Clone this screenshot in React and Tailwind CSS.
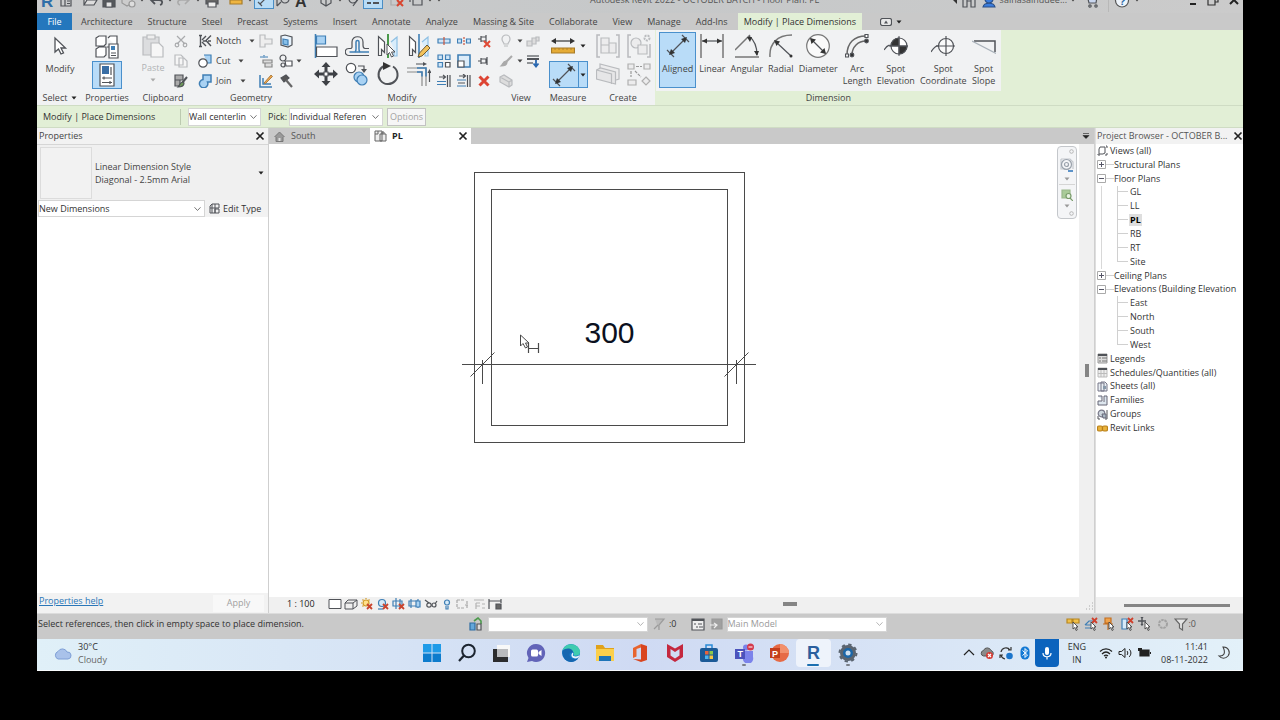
import React from "react";

const K = "#505358";
const B = "#3f7fb5";
const L = "#a9d2f3";
const G = "#b9bbbe";

function Svg({ s = 16, w, h, children, className = "" }) {
  const vw = w || s;
  const vh = h || s;
  return (
    <svg
      width={vw}
      height={vh}
      viewBox={`0 0 ${vw} ${vh}`}
      fill="none"
      stroke={K}
      strokeWidth="1.2"
      aria-hidden="true"
      className={`shrink-0 ${className}`}
    >
      {children}
    </svg>
  );
}

function Caret({ color = "#444", className = "" }) {
  return (
    <svg width="6" height="4" viewBox="0 0 6 4" aria-hidden="true" className={`shrink-0 ${className}`}>
      <path d="M0.5 0.5h5L3 3.5z" fill={color} />
    </svg>
  );
}

function Chevron({ color = "#777" }) {
  return (
    <svg
      width="7"
      height="5"
      viewBox="0 0 7 5"
      fill="none"
      stroke={color}
      aria-hidden="true"
      className="pointer-events-none absolute right-1 top-1/2 -translate-y-1/2"
    >
      <path d="M0.5 0.8 3.5 4 6.5 0.8" />
    </svg>
  );
}

function Close() {
  return (
    <Svg s={10}>
      <path d="M1.5 1.5l7 7M8.5 1.5l-7 7" stroke="#222" strokeWidth="1.7" />
    </Svg>
  );
}

function IconButton({ label, children, className = "" }) {
  return (
    <button type="button" aria-label={label} className={`flex shrink-0 items-center justify-center ${className}`}>
      {children}
    </button>
  );
}

/* ---------- Quick access toolbar ---------- */

const quick = [
  ["Revit menu", <Svg s={18}><text x="3" y="16" fill="#2f6ea8" stroke="none" fontSize="17" fontWeight="700" fontFamily="Liberation Sans, sans-serif">R</text></Svg>],
  ["Home", <Svg s={18}><path d="M4 3h10v12H4zM4 7h10M8 7v8M10 10h3M10 12.5h3" /></Svg>],
  "gap",
  ["Open", <Svg s={18}><path d="M3 14V5h5l1 2h5v2M3 14l3-5h10l-3 5z" fill="#ddd" /></Svg>],
  ["Save", <Svg s={18}><path d="M3 3h12v13H3z" fill="#55585c" /><path d="M6 11h6v5H6zM6 4h6v3H6z" fill="#e4e4e4" /></Svg>],
  ["Synchronize", <Svg s={18}><g stroke="#999"><path d="M3 6l5-2 5 2v6l-5 3-5-3z" fill="#ccc" /><circle cx="13" cy="13" r="3" fill="#ddd" /></g></Svg>],
  "caret",
  ["Undo", <Svg s={18}><path d="M4 9h8c4 0 4 4 1 5M8 5 4 9l4 4" strokeWidth="1.8" /></Svg>],
  "caret",
  ["Redo", <Svg s={18}><path d="M14 9H6c-4 0-4 4-1 5M10 5l4 4-4 4" stroke="#aaa" strokeWidth="1.6" /></Svg>],
  "caret",
  ["Print", <Svg s={18}><path d="M3 7h12v6H3z" fill="#666" /><path d="M5 11h8v5H5z" fill="#eee" /></Svg>],
  "gap",
  ["Measure", <Svg s={18}><path d="M3 9h12v4H3z" fill="#efb540" stroke="#a77d2a" /></Svg>],
  "caret",
  ["Aligned dimension", <Svg s={18}><path d="M5 13 14 4M3 11l4 4M12 2l4 4" /></Svg>, true],
  ["Tag by category", <Svg s={18}><circle cx="11" cy="8" r="4" /><path d="M3 15l4-4M3 9v6" /></Svg>],
  ["Text", <Svg s={18}><text x="2" y="16" fill="#333" stroke="none" fontSize="16" fontWeight="700" fontFamily="Liberation Sans, sans-serif">A</text></Svg>],
  "gap",
  ["Default 3D view", <Svg s={18}><path d="M4 6l5-3 5 3v6l-5 3-5-3zM4 6l5 3 5-3M9 9v6" /></Svg>],
  "caret",
  ["Section", <Svg s={18}><circle cx="8" cy="8" r="4" /><path d="M8 15l6-8" /></Svg>],
  ["Thin lines", <Svg s={18}><path d="M3 7h4M9 7h6M3 12h4M9 12h6" strokeWidth="2" /></Svg>, true],
  "gap",
  ["Close inactive views", <Svg s={18}><path d="M3 5h7v9H3z" stroke="#aaa" /><path d="M9 9l6 6M15 9l-6 6" stroke="#d8452f" strokeWidth="2" /></Svg>],
  ["Switch windows", <Svg s={18}><path d="M6 8h9v6H6zM3 6v5M3 6h6" /></Svg>],
  "caret",
  "caret",
];

function TitleBar() {
  return (
    <header className="flex h-[13px] shrink-0 items-end overflow-hidden bg-linear-to-r from-[#cbcccd] via-[#c6c8c9] to-[#cbcbcb]">
      <div className="flex h-[26px] w-full items-center pr-1">
        <div className="flex w-[553px] shrink-0 items-center gap-px pl-px">
          {quick.map((q, i) => {
            if (q === "gap") return <span key={i} className="w-1" />;
            if (q === "caret")
              return (
                <span key={i} className="flex w-2 justify-center">
                  <Caret />
                </span>
              );
            return (
              <IconButton
                key={i}
                label={q[0]}
                className={q[2] ? "h-[16px] overflow-hidden bg-[#b8dcf6] outline-1 outline-[#4a8dc4]" : "h-[18px]"}
              >
                {q[1]}
              </IconButton>
            );
          })}
        </div>
        <h1 className="shrink-0 whitespace-nowrap text-[#555]">Autodesk Revit 2022 - OCTOBER BATCH - Floor Plan: PL</h1>
        <div className="flex flex-1 items-center justify-end gap-1">
          <Svg w={5} h={8}><path d="M5 0v8L1 4z" fill="#333" stroke="none" /></Svg>
          <IconButton label="Search">
            <Svg s={16}><path d="M2 6h4v9H2zM10 6h4v9h-4zM6 9h4M3 6V3M13 6V3" /></Svg>
          </IconButton>
          <button type="button" className="flex items-center gap-[3px] whitespace-nowrap text-[#555]">
            <Svg s={16}><circle cx="8" cy="7" r="4" fill="#3b7ddd" stroke="#2a4f86" /><path d="M2 15c1-5 11-5 12 0z" fill="#3b7ddd" stroke="#2a4f86" /></Svg>
            sainasainudee...
            <Caret />
          </button>
          <IconButton label="App store" className="mx-1">
            <Svg s={16}><path d="M1 3h2l2 8h7l1-6H4" fill="#c9d6ee" /><circle cx="6" cy="14" r="1.2" /><circle cx="12" cy="14" r="1.2" /></Svg>
          </IconButton>
          <span className="h-6 w-px bg-[#b8b8b8]" />
          <IconButton label="Help" className="ml-px gap-1">
            <Svg s={16}><circle cx="8" cy="8.5" r="6.5" fill="#eef4fb" stroke="#555" /><text x="5" y="13" fill="#2f6ea8" stroke="none" fontSize="11" fontWeight="700" fontFamily="Liberation Sans, sans-serif">?</text></Svg>
            <Caret />
          </IconButton>
          <div className="ml-[45px] flex items-center gap-2.5">
            <IconButton label="Minimize"><Svg w={8} h={12}><path d="M1 10h6" stroke="#222" strokeWidth="2" /></Svg></IconButton>
            <IconButton label="Restore"><Svg s={12}><path d="M1 5h7v6H1zM3 5V2h8v6H8" stroke="#333" /></Svg></IconButton>
            <IconButton label="Close window"><Svg s={10}><path d="M1 1l8 8M9 1L1 9" stroke="#222" strokeWidth="2" /></Svg></IconButton>
          </div>
        </div>
      </div>
    </header>
  );
}

/* ---------- Ribbon tabs ---------- */

const tabs = ["Architecture", "Structure", "Steel", "Precast", "Systems", "Insert", "Annotate", "Analyze", "Massing & Site", "Collaborate", "View", "Manage", "Add-Ins"];

function RibbonTabs() {
  return (
    <nav className="flex h-[17px] shrink-0 items-stretch bg-[#c9c9c9] text-[#444]">
      <button type="button" className="w-[35px] bg-[#2477bd] text-white">File</button>
      <div className="flex gap-[15px] pr-2.5 pl-[9px]">
        {tabs.map((t) => (
          <button key={t} type="button" className="whitespace-nowrap">{t}</button>
        ))}
      </div>
      <button type="button" className="bg-[#e2efd6] px-1.5 whitespace-nowrap text-[#333]">Modify | Place Dimensions</button>
      <IconButton label="Minimize ribbon" className="ml-[18px] gap-1">
        <Svg w={12} h={8}><rect x="0.5" y="0.5" width="11" height="7" rx="2" fill="#e8e8e8" /><path d="M4 5.5h4L6 2.5z" fill={K} stroke="none" /></Svg>
        <Caret color="#222" />
      </IconButton>
    </nav>
  );
}

/* ---------- Ribbon ---------- */

function Panel({ title, caret, width, children }) {
  return (
    <section className={`flex shrink-0 flex-col bg-[#f1f2f3] ${width}`}>
      <div className="flex h-[61px] justify-center">{children}</div>
      <h2 className="flex h-[14px] items-center justify-center gap-1 text-[#444]">
        {title}
        {caret && <Caret color="#222" />}
      </h2>
    </section>
  );
}

function Small({ items, width = "w-5" }) {
  return (
    <div className={`flex flex-col pt-px ${width}`}>
      {items.map(([label, icon]) => (
        <IconButton key={label} label={label} className="h-5">{icon}</IconButton>
      ))}
    </div>
  );
}

function Pair({ items, width = "w-[31px]" }) {
  return (
    <div className={`flex flex-col pt-[2px] ${width}`}>
      {items.map(([label, icon]) => (
        <IconButton key={label} label={label} className="h-7">{icon}</IconButton>
      ))}
    </div>
  );
}

const geometryRows = [
  ["Notch", <Svg s={14}><path d="M1 1.500h3M1 12.500h3M2.500 1.500v11M5 7h4M13 1.500 8 6.500l5 5.500M8 2 4 6M8 12 4 8M10 7h3" strokeWidth="1.4" /></Svg>],
  ["Cut", <Svg s={14}><path d="M6 1h7v8H9" fill={L} stroke={B} /><circle cx="5" cy="9" r="4.2" fill="#fff" /></Svg>],
  ["Join", <Svg s={14}><path d="M5 1h8v7h-3.500A4.200 4.200 0 1 1 5 5.500z" fill={L} stroke={B} strokeWidth="1.5" /></Svg>],
];

const mirror = (
  <path d="M2.500 2.500v19h3v-6l3 3V8z" fill="#fff" stroke={K} />
);

const modifyPairs = [
  [
    ["Align", <Svg s={24}><path d="M1.500 0v24" stroke={B} strokeWidth="1.6" /><path d="M2.500 2h9v8h-9z" fill={L} stroke={B} /><path d="M2.500 13h20.500v9.500H2.500z" fill="#fff" /></Svg>],
    ["Move", <Svg s={24}><path d="M12 0l4.500 5h-3v5h-3V5h-3zM12 24l4.500-5h-3v-5h-3v5h-3zM0 12l5-4.500v3h5v3H5v3zM24 12l-5-4.500v3h-5v3h5v3z" fill="#3e4146" stroke="none" /><path d="M10 10h4v4h-4z" fill="#fff" /></Svg>],
  ],
  [
    ["Offset", <Svg s={24}><path d="M24 21.500H4c-5 0-5-7 0-7h1.500c2 0 1.500-2 1.500-3.500V8c0-7 11-7 11 0v3c0 1.500 0 3.500 2 3.500h4" /><path d="M24 18H4.500" stroke={B} strokeWidth="1.5" /><path d="M10 18c1.500-1 1-3 1-5V8c0-2 3-2 3 0v5c0 2-.5 4 1 5" stroke={B} strokeWidth="1.5" /></Svg>],
    ["Copy", <Svg s={24}><circle cx="6" cy="6" r="4.700" fill="#fff" /><path d="M13 4h6v3" /><path d="M16 7h6l-3 4z" fill={K} stroke="none" /><circle cx="14" cy="15" r="5" fill={L} stroke={B} /><circle cx="17" cy="18" r="5" fill={L} stroke={B} /></Svg>],
  ],
  [
    ["Mirror pick axis", <Svg s={24}>{mirror}<path d="M12 0v24" stroke="#4b9a4b" strokeWidth="2" /><path d="M15 8l6-5v19h-3v-6" fill="#d9edfb" stroke="#8fc0e4" /><path d="M11 10v11l2.500-2.500 2 4.500 2-1-2-4h3.500z" fill="#fff" strokeWidth="1" /></Svg>],
    ["Rotate", <Svg s={24}><path d="M8 4A9.500 9.500 0 1 0 17 4.500" strokeWidth="2" /><path d="M7 0v8l8-4z" fill="#333" stroke="none" /></Svg>],
  ],
  [
    ["Mirror draw axis", <Svg s={24}>{mirror}<path d="M12 0v24" stroke={B} strokeWidth="1.600" /><path d="M15 8l6-5v19h-3v-6" fill="#d9edfb" stroke="#8fc0e4" /><path d="M11 23l1.500-4L20 11l3 3-8 8z" fill="#f3c25a" stroke="#6e5a32" strokeWidth="1" /></Svg>],
    ["Trim", <Svg s={24}><path d="M0 6h19v18M0 10h15v14" stroke="#8a8a8a" /><path d="M10 6h9v8.500M10 10h5v4.500" stroke={B} strokeWidth="1.500" /><path d="M9 2h8M22.500 20V9" /><path d="M16 0l4 2-4 2zM20.500 11l2-4 2 4z" fill={K} stroke="none" /></Svg>],
  ],
];

const modifySmall = [
  [
    ["Split element", <Svg s={14}><path d="M1 5h12v4H1z" stroke={B} fill="#cfe5f7" /><path d="M7 3v8" stroke="#c8523a" /></Svg>],
    ["Array", <Svg s={14}><path d="M1 1h4.500v4.500H1zM8.500 1H13v4.500H8.500zM1 8.500h4.500V13H1z" fill="#cfe5f7" stroke={B} /><path d="M8.500 8.500H13V13H8.500z" fill="#fff" /></Svg>],
    ["Trim single", <Svg s={14}><path d="M2 3h6M6 1l2.500 2L6 5" /><path d="M0 7.500h9M0 10.500h9" stroke={B} /><path d="M10.500 1v12M13 1v12" /></Svg>],
  ],
  [
    ["Split with gap", <Svg s={14}><path d="M0.500 5h4v4h-4zM9.500 5h4v4h-4z" stroke={B} fill="#cfe5f7" /><path d="M7 3v8" stroke="#c8523a" strokeDasharray="2 1" /></Svg>],
    ["Scale", <Svg s={14}><path d="M1 1h12v12H1z" stroke={B} fill="#dcecf9" strokeWidth="1.600" /><path d="M1 7h6v6H1z" fill="#fff" /></Svg>],
    ["Trim multiple", <Svg s={14}><path d="M2 2h6M6 0l2.500 2L6 4M1 9h7" /><path d="M0 6h9M0 12h9" stroke={B} /><path d="M10.500 1v12M13 1v12" /></Svg>],
  ],
  [
    ["Unpin", <Svg s={14}><path d="M1 5h3M4 2v6M4 3h5v4H4M9 1v8" /><path d="M7 7l6 6M13 7l-6 6" stroke="#e04a35" strokeWidth="2" /></Svg>],
    ["Pin", <Svg s={14}><path d="M1 7h3M4 4v6M4 5h5v4H4M10 3v8" /></Svg>],
    ["Delete", <Svg s={14}><path d="M2.500 2.500l9 9M11.500 2.500l-9 9" stroke="#dd4433" strokeWidth="3" /></Svg>],
  ],
];

const alignedIcon = (
  <Svg s={24}>
    <path d="M4 20 20 4M1 16l7 7M16 1l7 7" />
    <path d="M3 21l2-6 4 4zM21 3l-2 6-4-4z" fill="#333" stroke="none" />
  </Svg>
);

const dimensions = [
  ["Aligned", "", alignedIcon],
  ["Linear", "", <Svg s={24}><path d="M1 0v24M23 0v24" stroke="#777" strokeWidth="1.500" /><path d="M2 7h20" /><path d="M2 7l5-2.500v5zM22 7l-5-2.500v5z" fill="#333" stroke="none" /></Svg>],
  ["Angular", "", <Svg s={24}><path d="M0 23h24M0 16 15 1" stroke="#777" strokeWidth="1.500" /><path d="M14 2c5 4 8 11 8 19" /><path d="M12 3l5 0-2 5zM22 22l-3-5h5z" fill="#333" stroke="none" /></Svg>],
  ["Radial", "", <Svg s={24}><path d="M1 23C0 10 8 1 23 1" stroke="#777" strokeWidth="1.500" /><path d="M7 8l15 14" /><path d="M5 6l6 1.500L7.500 12z" fill="#333" stroke="none" /><circle cx="22" cy="22" r="1.500" fill="#333" stroke="none" /></Svg>],
  ["Diameter", "", <Svg s={24}><circle cx="12" cy="12" r="11.300" fill="#fafafa" stroke="#777" /><path d="M5 5l14 14" /><path d="M4 4l6 1.500L5.500 10zM20 20l-6-1.500 4.500-4.500z" fill="#333" stroke="none" /></Svg>],
  ["Arc", "Length", <Svg s={24}><path d="M2 21C2 9 9 2 21 2M7 21C7 13 13 7 21 7" stroke="#666" strokeWidth="1.500" /><path d="M0.500 20h3v3h-3zM20 0.500h3v3h-3z" fill="#fff" /><circle cx="7" cy="21" r="1.800" fill="#333" /><circle cx="21.500" cy="7" r="1.800" fill="#333" /></Svg>],
  ["Spot", "Elevation", <Svg s={24}><path d="M0 16c4-6 6-5 8-4" /><circle cx="15" cy="12" r="8" fill="#fff" /><path d="M15 4a8 8 0 0 1 8 8h-8zM15 20a8 8 0 0 1-8-8h8z" fill="#333" transform="matrix(-1 0 0 1 30 0)" /><path d="M15 2v20M5 12h19" strokeWidth="1" /></Svg>],
  ["Spot", "Coordinate", <Svg s={24}><path d="M0 18c3-5 5-7 8-6" /><circle cx="15" cy="12" r="7.500" fill="#fafafa" /><path d="M15 2v20M5 12h19" /></Svg>],
  ["Spot", "Slope", <Svg s={24}><path d="M2 7h21v11" strokeWidth="1.500" /><path d="M0 7l24 12.500" stroke="#aab2ba" /></Svg>],
];

function Ribbon() {
  return (
    <div className="flex h-[75px] shrink-0 overflow-hidden bg-[#e2efd6] text-[#444]">
      <Panel title="Select" caret width="w-[46px]">
        <button type="button" className="flex flex-col items-center gap-[5px] pt-1">
          <Svg s={24}><path d="M7 4v14l3.500-3 2.500 5 2.500-1-2.500-5h4.500z" fill="#fff" strokeWidth="1.300" /></Svg>
          <span className="leading-3">Modify</span>
        </button>
      </Panel>
      <Panel title="Properties" width="w-[48px]">
        <div className="flex flex-col items-center pt-[3px]">
          <IconButton label="Type properties" className="h-7">
            <Svg s={24}><path d="M1 3l3-2h7v8l-2 2H1zM13 3l2-2h7v8l-1 2M1 14l3-2h7v8l-2 2H1zM12 12h2" fill="#fff" /><path d="M14 9h9v14h-9z" fill="#fff" /><path d="M16 11h4v4h-4z" fill={B} stroke="none" /><path d="M16 18h5M16 20.500h5" strokeWidth="1" /></Svg>
          </IconButton>
          <button type="button" aria-label="Properties palette" className="flex h-7 w-[30px] items-center justify-center border border-[#4a90cc] bg-[#b9dcf8]">
            <Svg s={24}><path d="M5 1h14v22H5z" fill="#fff" /><path d="M7 3h7v8H7z" fill="#3a6ea5" stroke="none" /><path d="M16 4v8M7 15h10M7 19.500h10M9 13.500v3M15 18v3" /></Svg>
          </button>
        </div>
      </Panel>
      <Panel title="Clipboard" width="w-[64px]">
        <button type="button" className="flex w-9 flex-col items-center gap-1 pt-1 text-[#b0b2b5]">
          <Svg s={24}><g stroke={G}><path d="M2 3h16v18H2z" fill="#dcdddf" /><path d="M6 1h8v4H6z" fill="#eee" /><path d="M10 9h8l4 4v10H10z" fill="#f6f6f6" /></g></Svg>
          <span className="leading-3">Paste</span>
          <Caret color="#aaa" />
        </button>
        <Small
          items={[
            ["Cut to clipboard", <Svg s={14}><path d="M3 2l8 8M11 2L3 10" stroke="#a9abad" /><circle cx="3" cy="11" r="1.800" stroke="#a9abad" /><circle cx="11" cy="11" r="1.800" stroke="#a9abad" /></Svg>],
            ["Copy to clipboard", <Svg s={14}><path d="M1 1h6l2 2v8H1zM5 4h5l3 3v6H5z" stroke={G} fill="#f6f6f6" /></Svg>],
            ["Match type", <Svg s={14}><path d="M1 1h8v5H1zM1 6h5v6H1z" fill="#aaa" /><path d="M13 3L8 9" strokeWidth="2" /><path d="M9 8c-3 0-3 3-5 5 4 0 6-1 6-4z" fill="#6d9a58" /></Svg>],
          ]}
        />
      </Panel>
      <Panel title="Geometry" width="w-[112px]">
        <div className="flex w-[58px] flex-col pt-px">
          {geometryRows.map(([label, icon]) => (
            <button key={label} type="button" className="flex h-5 items-center gap-[4px]">
              {icon}
              {label}
              <Caret className="ml-1" />
            </button>
          ))}
        </div>
        <Small
          items={[
            ["Cope", <Svg s={14}><path d="M1 1h5v4h7v5H6v3H1z" stroke={G} fill="#eee" /></Svg>],
            ["Wall joins", <Svg s={14}><path d="M1 3h3M6 3h3M5 1v3" stroke={B} /><path d="M4 6h9v3H4zM6 9v4h7v-3" fill="#ddd" stroke="#888" /></Svg>],
            ["Paint measure", <Svg s={14}><path d="M1 1v12h12M4 4v6h8" stroke={B} strokeWidth="1.500" /><path d="M5 9l7-8 1.500 1.500-7 7z" fill="#f0a54a" stroke="#9a6d31" strokeWidth="0.800" /></Svg>],
          ]}
        />
        <Small
          items={[
            ["Split face", <Svg s={14}><path d="M2 2l4-1 7 2v8l-4 2-7-2z" fill="#e8f3fc" /><path d="M4 5l5 1v5l-5-1z" fill="#86bfe9" stroke={B} /></Svg>],
            ["Demolish area", <Svg s={14}><circle cx="4" cy="4" r="3" /><path d="M6 7h7v5H7z" fill="#fff" /><circle cx="4" cy="11" r="2" /></Svg>],
            ["Demolish", <Svg s={14}><path d="M2 4l5-3 3 3-5 4z" fill="#555" /><path d="M7 6l6 7" stroke="#666" strokeWidth="2.200" /></Svg>],
          ]}
        />
        <div className="flex w-2 flex-col justify-center"><Caret /></div>
      </Panel>
      <Panel title="Modify" width="w-[190px]">
        {modifyPairs.map((p, i) => <Pair key={i} items={p} />)}
        {modifySmall.map((p, i) => <Small key={i} items={p} />)}
      </Panel>
      <Panel title="View" width="w-[48px]">
        <div className="flex flex-col pt-px">
          <IconButton label="Hide elements" className="h-5 gap-1"><Svg s={14}><path d="M5 10c0-2-2-2-2-5a4 4 0 0 1 8 0c0 3-2 3-2 5zM5 12h4" stroke={G} /></Svg><Caret /></IconButton>
          <IconButton label="Override graphics" className="h-5 gap-1"><Svg s={14}><path d="M13 2L7 8" stroke="#aaa" strokeWidth="2" /><path d="M7 7c-3 0-3 3-5 5 4 0 6-1 6-4z" fill="#aaa" stroke="#aaa" /></Svg><Caret /></IconButton>
          <IconButton label="Selection box" className="h-5 w-[14px]"><Svg s={14}><path d="M1 3l4-2 8 5v5l-3 2-9-5zM1 3l9 5v5M10 8l3-2" stroke={G} fill="#ddd" /></Svg></IconButton>
        </div>
        <Small
          width="w-5"
          items={[
            ["Displace elements", <Svg s={14}><path d="M1 7h5v5H1zM6 4h4v6H6zM10 3h3v4h-3z" stroke={G} fill="#ddd" /></Svg>],
            ["Linework", <Svg s={14}><path d="M1 2h12" /><path d="M1 5h12" strokeWidth="2" /><path d="M1 9h6" /><path d="M10 6v6M7.500 9.500 10 12.500l2.500-3" stroke="#2a68b0" strokeWidth="1.800" /></Svg>],
          ]}
        />
      </Panel>
      <Panel title="Measure" width="w-[46px]">
        <div className="flex flex-col items-center gap-px pt-[2px]">
          <IconButton label="Measure between references" className="h-7 gap-[5px]">
            <Svg s={24}><path d="M3 7h18" stroke="#333" /><path d="M0 7l5-3v6zM24 7l-5-3v6z" fill="#333" stroke="none" /><path d="M0.500 14h23v5h-23z" fill="#e5ab35" stroke="#a87b26" /><path d="M4 14v2M8 14v2M12 14v2M16 14v2M20 14v2" stroke="#a87b26" strokeWidth="0.800" /></Svg>
            <Caret color="#222" />
          </IconButton>
          <div className="flex h-[27px] border border-[#4a90cc] bg-[#b9dcf8]">
            <IconButton label="Dimension tools" className="w-7">{alignedIcon}</IconButton>
            <IconButton label="More dimension tools" className="w-[9px] border-l border-[#4a90cc]"><Caret color="#222" /></IconButton>
          </div>
        </div>
      </Panel>
      <Panel title="Create" width="w-[64px]">
        <Pair
          items={[
            ["Create assembly", <Svg s={24}><g stroke={G}><path d="M4 1H1v22h3M20 1h3v22h-3" strokeWidth="1.500" /><path d="M5 4h8v7H5zM5 11h8v8H5zM13 9h7v10h-7z" fill="#ececed" /></g></Svg>],
            ["Create similar", <Svg s={24}><g stroke={G}><path d="M4 6V2l19 5v10l-3 1" fill="#ececed" /><path d="M0.500 8l4-2 15 4v12L0.500 17zM0.500 8l15 4v10" fill="#e6e6e7" /></g></Svg>],
          ]}
        />
        <Pair
          items={[
            ["Create group", <Svg s={24}><g stroke={G}><path d="M4 1H1v22h3M23 10v13h-3" strokeWidth="1.500" /><circle cx="9" cy="9" r="5" fill="#ececed" /><path d="M11 11h9v9h-9z" fill="#ececed" /><circle cx="20" cy="4" r="2.500" strokeWidth="2" strokeDasharray="2 1" /></g></Svg>],
            ["Create parts", <Svg s={24}><g stroke="#b0b0b0"><path d="M1 2h6v5H1zM17 2h6v5h-6zM1 18h8v5H1zM19 15l4 4-4 4-4-4z" fill="#ececed" /><path d="M9 4.500h6M4 9v6M8 9l6 6" stroke="#999" strokeDasharray="3 1" /></g></Svg>],
          ]}
        />
      </Panel>
      <section className="flex shrink-0 flex-col pl-px">
        <div className="flex h-[61px] items-start gap-px bg-[#f1f2f3] px-[3px] pt-[2px]">
          {dimensions.map(([a, b, icon], i) => (
            <button
              key={a + b}
              type="button"
              className={
                i === 0
                  ? "flex h-14 flex-col items-center gap-[5px] border border-[#4a90cc] bg-[#b9dcf8] px-[2px] pt-px"
                  : "flex h-14 flex-col items-center gap-[5px] px-[2px] pt-[2px]"
              }
            >
              {icon}
              <span className="flex flex-col leading-3">
                <span>{a}</span>
                {b && <span>{b}</span>}
              </span>
            </button>
          ))}
        </div>
        <h2 className="flex h-[14px] items-center justify-center">Dimension</h2>
      </section>
    </div>
  );
}

/* ---------- Options bar ---------- */

function Combo({ label, value, className = "", textClass = "", chevron }) {
  return (
    <div className={`relative ${className}`}>
      <select
        aria-label={label}
        defaultValue={value}
        className={`h-full w-full appearance-none overflow-hidden border border-[#d5d5d5] bg-white ${textClass}`}
      >
        <option value={value}>{value}</option>
      </select>
      <Chevron color={chevron} />
    </div>
  );
}

function OptionsBar() {
  return (
    <div className="flex h-[23px] shrink-0 items-center border-y border-[#cfdcc4] bg-[#e2efd6] pl-1.5 text-[#333]">
      <span className="w-[137px] whitespace-nowrap">Modify | Place Dimensions</span>
      <span className="mr-[7px] h-4 w-px bg-[#bccab0]" />
      <Combo label="Wall reference" value="Wall centerlin" className="h-[18px] w-[73px]" />
      <label htmlFor="pick" className="ml-[7px] w-[21px]">Pick:</label>
      <div className="relative h-[18px] w-[94px]">
        <select id="pick" defaultValue="r" className="h-full w-full appearance-none border border-[#d5d5d5] bg-white">
          <option value="r">Individual Referen</option>
        </select>
        <Chevron />
      </div>
      <button type="button" disabled className="ml-1 h-[18px] w-[39px] border border-[#c2c2c2] bg-[#f6f6f6] text-[#a3a3a3]">Options</button>
    </div>
  );
}

/* ---------- Properties ---------- */

function PropertiesPanel() {
  return (
    <aside className="flex w-[232px] shrink-0 flex-col border-r border-[#cfcfcf] bg-white text-[#444]">
      <div className="flex h-4 shrink-0 items-center justify-between bg-[#f2f2f2] pr-[3px] pl-[2px]">
        <h2>Properties</h2>
        <IconButton label="Close properties"><Close /></IconButton>
      </div>
      <button type="button" className="flex h-14 shrink-0 items-center border-t border-[#d6d6d6] bg-[#f0f0f0] pr-[4px] pl-[3px] text-left">
        <span className="h-[52px] w-[52px] border border-[#dcdcdc] bg-[#f2f2f2]" />
        <span className="ml-[3px] flex-1 leading-[13px]">
          Linear Dimension Style
          <br />
          Diagonal - 2.5mm Arial
        </span>
        <Caret color="#222" />
      </button>
      <div className="flex h-[17px] shrink-0 items-center bg-[#f2f2f2] pl-px">
        <Combo label="Element filter" value="New Dimensions" className="h-[17px] w-[167px]" textClass="text-[#333]" />
        <button type="button" className="ml-1 flex items-center gap-[3px] whitespace-nowrap text-[#333]">
          <Svg s={11}><path d="M1 3l2-2h3v9H1zM6 1h4v4H6M3 1v9M1 5h5M6 6h4v4H6z" strokeWidth="1" /></Svg>
          Edit Type
        </button>
      </div>
      <div className="flex-1" />
      <div className="flex h-5 shrink-0 items-center justify-between bg-[#f2f2f2] pr-1 pl-[2px]">
        <a href="#help" className="mb-1 text-[#2a76b8] underline">Properties help</a>
        <button type="button" disabled className="h-[17px] w-[51px] bg-[#f8f8f8] text-[#a0a0a0]">Apply</button>
      </div>
    </aside>
  );
}

/* ---------- Drawing area ---------- */

const viewIcons = [
  ["Detail level", <Svg s={14}><path d="M1 2.500h12v9H1z" strokeWidth="1" fill="#fff" /></Svg>],
  ["Visual style", <Svg s={14}><path d="M1 6h8v6H1zM1 6l3-3h9L9 6M13 3v6l-4 3" strokeWidth="1" fill="#eee" /></Svg>],
  ["Sun path", <Svg s={14}><circle cx="6" cy="6" r="3" fill="#ffe08a" stroke="#d19a26" /><path d="M6 1v1M1 6h1M2.500 2.500l1 1M9.500 2.500l-1 1M2.500 9.500l1-1" stroke="#d19a26" /><path d="M7 7l5 5M12 7l-5 5" stroke="#c9442e" strokeWidth="1.800" /></Svg>],
  ["Shadows", <Svg s={14}><circle cx="6" cy="6" r="3.500" fill="#d6eaf8" stroke={B} /><path d="M2 12h5" stroke={B} /><path d="M7 7l5 5M12 7l-5 5" stroke="#c9442e" strokeWidth="1.800" /></Svg>],
  ["Crop view", <Svg s={14}><path d="M1 4h9v5H1zM4 1v11M8 2v9" stroke={B} /><path d="M7 7l5 5M12 7l-5 5" stroke="#c9442e" strokeWidth="1.800" /></Svg>],
  ["Show crop region", <Svg s={14}><path d="M1 4h8v5H1zM3 2v9M10 2v9" stroke={B} /><path d="M8 4h4v6H8z" fill="#a9d2f3" stroke={B} /></Svg>],
  ["Temporary hide", <Svg s={14}><path d="M1 3l4 3M13 4l-2 3" /><circle cx="5" cy="8" r="2.200" /><circle cx="10" cy="8" r="2" /></Svg>],
  ["Reveal hidden", <Svg s={14}><circle cx="7" cy="5.500" r="2.500" fill="#d6eaf8" stroke={B} /><path d="M6 9v3h2V9" stroke={B} /></Svg>],
  ["Temporary view properties", <Svg s={14}><path d="M1 3h8M1 3v8h7M11 4v7M9 8h4" stroke="#a8a8a8" strokeDasharray="3 1" /></Svg>],
  ["Analytical model", <Svg s={14}><path d="M2 3h10M4 6v6M4 6h4M4 9h4M10 7h3M10 11h3" stroke="#b4b4b4" /></Svg>],
  ["Reveal constraints", <Svg s={14}><path d="M1 2v10M1 4h12M13 2v4" /><path d="M8 7h5v5H8z" fill="#666" /></Svg>],
];

function DrawingArea() {
  return (
    <main className="flex min-w-0 flex-1 flex-col border-r border-[#cfcfcf] bg-white">
      <div className="flex h-4 shrink-0 items-center bg-[#c9c9c9] text-[#555]">
        <button type="button" className="flex w-[101px] items-center gap-[6px] pl-[5px]">
          <Svg s={11}><path d="M0.500 6 5.500 1l5 5M2 6v4.500h7V6" fill="#999" stroke="#777" strokeWidth="1" /><path d="M4.500 7h2v3h-2z" fill="#ddd" stroke="none" /></Svg>
          South
        </button>
        <div className="flex h-full w-[101px] items-center bg-white pr-[3px] pl-1">
          <Svg w={13} h={12}><path d="M1 1h7v10H1zM4 1v3M1 4h3M6 4h6v7H6zM8 4V2h2v2" strokeWidth="1" stroke="#666" fill="#eee" /></Svg>
          <button type="button" className="flex-1 pl-[5px] text-left font-bold text-[#222]">PL</button>
          <IconButton label="Close view"><Close /></IconButton>
        </div>
        <IconButton label="View list" className="mr-1 ml-auto"><Svg w={8} h={6}><path d="M1 0.500h6M1 2.500h6L4 5.500z" fill="#222" stroke="#222" strokeWidth="0.600" /></Svg></IconButton>
      </div>
      <div className="flex min-h-0 flex-1">
        <div className="relative min-w-0 flex-1">
          <svg width="100%" height="100%" fill="none" stroke="#4a4a4a" strokeWidth="1" role="img" aria-label="Floor plan" className="absolute inset-0">
            <rect x="205.500" y="28.500" width="270" height="270" />
            <rect x="222.500" y="45.500" width="236" height="236" />
            <path d="M193 220.500h294M213.500 216v24M467.500 216v24M201.500 232.500l24-24M455.500 232.500l24-24" />
            <text x="315.500" y="199" fill="#0b1020" stroke="none" fontSize="30" fontFamily="Liberation Sans, Arial, sans-serif">300</text>
            <path d="M251.500 191v11l2.500-2.500 2.500 4.500 2-1-2-4h3.500z" fill="#fff" />
            <path d="M259.500 199v10M269.500 199v10M259.500 204.500h10" strokeWidth="1.200" />
          </svg>
          <div className="absolute top-[2px] right-[2px] flex h-[73px] w-5 flex-col items-center justify-between rounded border border-[#c4c7cb] bg-[#f4f5f7] py-[2px]">
            <Svg w={14} h={5} className="self-end"><circle cx="9.500" cy="2.500" r="1.800" stroke="#aaa" strokeWidth="0.800" /></Svg>
            <IconButton label="Steering wheel"><Svg w={16} h={17}><path d="M2 2h9l3 3v7M2 2v10h8" stroke="#c4c8ce" /><circle cx="7.500" cy="7.500" r="5" stroke="#9aa2ac" /><circle cx="7.500" cy="7.500" r="2" stroke="#9aa2ac" /><path d="M9 14h5" stroke="#5d93c9" strokeWidth="2" /></Svg></IconButton>
            <Caret color="#999" />
            <span className="h-px w-4 bg-[#d5d5d5]" />
            <IconButton label="Zoom region"><Svg s={12}><path d="M1 1h8v8H1z" fill="#a9cb98" stroke="#9ab88c" /><circle cx="7.500" cy="7" r="2.500" fill="#e8f3e2" stroke="#789b69" /><path d="M9 9l3 3" stroke="#789b69" /></Svg></IconButton>
            <Caret color="#999" />
            <Svg w={14} h={5} className="self-end"><circle cx="9.500" cy="2.500" r="1.800" stroke="#aaa" strokeWidth="0.800" /></Svg>
          </div>
        </div>
        <div className="flex w-[15px] shrink-0 items-center justify-center bg-[#f0f0f0]">
          <span className="h-[13px] w-1 bg-[#858585]" />
        </div>
      </div>
      <div className="flex h-4 shrink-0 items-center bg-[#f0f0f0] pb-[2px] text-[#222]">
        <button type="button" className="w-[59px] pl-[18px] text-left whitespace-nowrap">1 : 100</button>
        <div className="flex gap-[2px]">
          {viewIcons.map(([label, icon]) => <IconButton key={label} label={label}>{icon}</IconButton>)}
        </div>
        <div className="flex flex-1 justify-center pr-[7px]">
          <span className="h-1 w-[14px] bg-[#858585]" />
        </div>
        <Svg s={10} className="self-end"><path d="M8 2h1M5 5h1M8 5h1M2 8h1M5 8h1M8 8h1" stroke="#aaa" /></Svg>
      </div>
    </main>
  );
}

/* ---------- Project browser ---------- */

const tree = [
  [0, "Views (all)", "views"],
  [1, "Structural Plans", "+"],
  [1, "Floor Plans", "-"],
  [2, "GL", "", true], [2, "LL", "", true], [2, "PL", "active", true], [2, "RB", "", true], [2, "RT", "", true], [2, "Site", "last", true],
  [1, "Ceiling Plans", "+"],
  [1, "Elevations (Building Elevation", "-"],
  [2, "East"], [2, "North"], [2, "South"], [2, "West", "last"],
  [0, "Legends", "legend"],
  [0, "Schedules/Quantities (all)", "table"],
  [0, "Sheets (all)", "sheet"],
  [0, "Families", "family"],
  [0, "Groups", "group"],
  [0, "Revit Links", "link"],
];

const treeIcons = {
  views: <Svg s={11}><path d="M3 2h5v6l-2 1H2V4zM9 1h1v2M1 9v1h2M10 8v2H8" strokeWidth="1" /></Svg>,
  legend: <Svg s={11}><path d="M1 1h9v9H1z" fill="#ddd" stroke="#999" strokeWidth="1" /><path d="M1 2h9" strokeWidth="2" /><path d="M2 5h2M5 5h5M2 8h2M5 8h5" stroke="#777" strokeWidth="1" /></Svg>,
  table: <Svg s={11}><path d="M1 1h9v9H1zM1 6.500h9M4 3v7M7 3v7" fill="#eee" stroke="#bbb" strokeWidth="1" /><path d="M1 2h9" strokeWidth="2" /></Svg>,
  sheet: <Svg s={11}><path d="M1 2h6v8H1zM4 1h4l2 2v7H4z" fill="#e8eef3" stroke="#778" strokeWidth="1" /><path d="M6 5h3v3H6z" fill="#89a" stroke="none" /></Svg>,
  family: <Svg s={11}><path d="M1 1h4v5H1v4h9V1H7v6" fill="#dde6ee" stroke="#667" strokeWidth="1" /></Svg>,
  group: <Svg s={11}><path d="M10 1v9H8M1 7v3h2" strokeWidth="1" /><circle cx="4.500" cy="4.500" r="3.300" fill="#cdd6dd" stroke="#778" /><path d="M5 5h4v4H6z" fill="#aab8c4" stroke="#667" strokeWidth="1" /></Svg>,
  link: <Svg s={11}><rect x="0.500" y="3" width="5" height="5" rx="1.500" fill="#e9b23c" stroke="#b98019" /><rect x="5.500" y="3" width="5" height="5" rx="1.500" fill="#e9b23c" stroke="#b98019" /></Svg>,
};

function TreeRow({ level, text, kind, trunk }) {
  if (level === 0)
    return (
      <li className="flex items-center gap-[2px] pl-px">
        {treeIcons[kind]}
        <span>{text}</span>
      </li>
    );
  if (level === 1)
    return (
      <li className="flex items-center pl-px">
        <Svg s={9}><path d="M0.500 0.500h8v8h-8z" fill="#fff" stroke="#aaa" strokeWidth="1" /><path d={kind === "+" ? "M2 4.500h5M4.500 2v5" : "M2 4.500h5"} stroke="#556" strokeWidth="1" /></Svg>
        <span className="h-px w-2 bg-[#d0d0d0]" />
        <span className="whitespace-nowrap">{text}</span>
      </li>
    );
  return (
    <li className="flex items-center pl-[5px]">
      <span className={`w-4 self-stretch border-l ${trunk ? "border-[#d8d8d8]" : "border-transparent"}`} />
      <span className={`flex flex-col self-stretch border-l border-[#d0d0d0] ${kind === "last" ? "mb-[7px]" : ""}`}>
        <span className={`w-2.5 border-[#d0d0d0] ${kind === "last" ? "flex-1 border-b" : "h-1/2 border-b"}`} />
      </span>
      <span className={kind === "active" ? "ml-px bg-[#dedede] px-px leading-3 font-bold text-black" : "ml-[2px]"}>{text}</span>
    </li>
  );
}

function ProjectBrowser() {
  return (
    <aside className="flex w-[148px] shrink-0 flex-col border-l border-[#dedede] bg-white text-[#333]">
      <div className="flex h-4 shrink-0 items-center justify-between bg-[#f2f2f2] pl-px">
        <h2 className="whitespace-nowrap text-[#555]">Project Browser - OCTOBER B...</h2>
        <IconButton label="Close project browser"><Close /></IconButton>
      </div>
      <ul className="grid h-[291px] shrink-0 auto-rows-fr overflow-hidden">
        {tree.map(([level, text, kind, trunk]) => (
          <TreeRow key={level + text} level={level} text={text} kind={kind} trunk={trunk} />
        ))}
      </ul>
      <div className="flex-1" />
      <div className="flex h-4 shrink-0 items-center bg-[#f0f0f0] pr-[13px] pl-7">
        <span className="h-[3px] flex-1 bg-[#858585]" />
      </div>
    </aside>
  );
}

/* ---------- Status bar ---------- */

const arrow = <path d="M7 5v7l1.800-1.500 1.300 3 1.200-.6-1.300-2.900h2z" fill="#fff" strokeWidth="0.900" stroke="#444" />;
const selectIcons = [
  ["Select links", <Svg s={14}><path d="M1 2h5v4H1zM7 2h6v4H7z" fill="#f0c04a" stroke="#b8861e" />{arrow}</Svg>],
  ["Select underlay", <Svg s={14}><path d="M1 8l4-4h6M1 8h6M1 11h6" stroke={B} /><path d="M8 1l5 5M13 1l-5 5" stroke="#cf402c" strokeWidth="1.800" />{arrow}</Svg>],
  ["Select pinned", <Svg s={14}><path d="M3 1h6v5H3zM1 7h10M6 7v6" fill="#f0a24a" stroke="#c46f21" />{arrow}</Svg>],
  ["Select by face", <Svg s={14}><path d="M2 2h5v10H2z" fill="#d7eaf8" stroke={B} /><path d="M8 1l5 5M13 1l-5 5" stroke="#cf402c" strokeWidth="1.800" />{arrow}</Svg>],
  ["Drag on selection", <Svg s={14}><path d="M4 0v8M0 4h8M3 1l1-1 1 1M3 7l1 1 1-1" strokeWidth="1.400" />{arrow}</Svg>],
  ["Background processes", <Svg s={14}><circle cx="7" cy="7" r="4" stroke="#a2a2a2" strokeWidth="2" strokeDasharray="2.500 0.800" /></Svg>],
];

function StatusBar() {
  return (
    <footer className="flex h-[26px] shrink-0 items-center border-t border-[#dcdcdc] bg-[#c9c9c9] pb-[5px] text-[#333]">
      <p className="w-[432px] shrink-0 pl-px">Select references, then click in empty space to place dimension.</p>
      <Svg s={14}><path d="M1 6h5v7H1z" fill="#63a7da" stroke="#2e6da3" /><path d="M5 4l4-3 3 3v3" stroke="#4b9a4b" strokeWidth="1.600" /><path d="M8 7h4v6H8z" fill="#ddd" /></Svg>
      <Combo label="Active workset" value="" className="ml-[5px] h-[15px] w-[160px]" chevron="#b5b5b5" />
      <button type="button" className="ml-1 flex items-center gap-[3px] text-[#333]">
        <Svg s={14}><path d="M3 2h9L7 8v5M2 12l4-4" stroke="#9c9c9c" fill="#bbb" /></Svg>
        :0
      </button>
      <IconButton label="Design options" className="ml-[14px]"><Svg s={14}><path d="M1 2h12v11H1z" fill="#eee" /><path d="M1 3h12" strokeWidth="2" /><path d="M3 7h2M7 7h4M5 10h2M8 10h4" /></Svg></IconButton>
      <IconButton label="Add to set" className="mx-1"><Svg s={14}><path d="M3 2h10v10H3z" fill="#a0a0a0" stroke="#999" /><path d="M1 8h6M5 6l3 2-3 3" stroke="#eee" /></Svg></IconButton>
      <Combo label="Design option" value="Main Model" className="h-[15px] w-[160px]" textClass="text-[#9a9a9a]" chevron="#b5b5b5" />
      <div className="ml-auto flex items-center gap-[4px] pr-[47px]">
        {selectIcons.map(([label, icon]) => <IconButton key={label} label={label}>{icon}</IconButton>)}
        <button type="button" className="flex items-center text-[#555]">
          <Svg s={14}><path d="M1 2h12L8.500 7v6l-3-2V7z" fill="#e4e4e4" stroke="#666" /></Svg>
          :0
        </button>
      </div>
    </footer>
  );
}

/* ---------- Taskbar ---------- */

const lf = "Liberation Sans, Arial, sans-serif";
const apps = [
  ["Start", <Svg s={20}><g stroke="none"><path d="M1 1h8.500v8.500H1zM10.500 1H19v8.500h-8.500z" fill="#1f9be8" /><path d="M1 10.500h8.500V19H1zM10.500 10.500H19V19h-8.500z" fill="#0d7ccd" /></g></Svg>],
  ["Search", <Svg s={20}><circle cx="11.500" cy="8" r="6.300" stroke="#1c2430" strokeWidth="2" /><path d="M7 12.500l-5 5.500" stroke="#1c2430" strokeWidth="2.200" /></Svg>],
  ["Task view", <Svg s={20}><g stroke="none"><path d="M6 2h13v12H6z" fill="#f8f8f8" /><path d="M2 6h15v13H2z" fill="#2c2c2e" /><path d="M6 6h11v8H6z" fill="#b9babd" /></g></Svg>],
  ["Chat", <Svg s={20}><path d="M10 1a9 9 0 1 1-4 17l-5 1 1.500-4A9 9 0 0 1 10 1z" fill="#6264b8" stroke="none" /><rect x="5" y="6.500" width="7" height="7" rx="1.500" fill="#fff" stroke="none" /><path d="M12.500 9l3-2v6l-3-2z" fill="#fff" stroke="none" /></Svg>],
  ["Edge", <Svg s={20}><g stroke="none"><circle cx="10" cy="10" r="9" fill="#1479c9" /><path d="M1.500 7.500C4-1 17-.5 19 8c.7 4-3 5.500-6.500 4.500C15 8 7 3.500 1.500 7.500z" fill="#3ecbb0" /><path d="M1.500 8C6 3 13 6 12 10c-3-1.500-5 1.500-2 5 2 1.500 5 1.500 7 .5C12 22 1 19 1.500 8z" fill="#1566b0" /><path d="M12 9.500c1 2-1 2.500.5 3.500 2 1 5 .3 6-1-.2 2-2 3.500-4 3.500-4 0-5.500-4-2.500-6z" fill="#e9f2fb" /></g></Svg>],
  ["File Explorer", <Svg s={20}><g stroke="none"><path d="M1 2h7l2 3h9v4H1z" fill="#e0a21c" /><path d="M1 6h18v12H1z" fill="#fbcf4b" /><path d="M4 13h12v5H4z" fill="#1d74b8" /></g></Svg>],
  ["Office", <Svg s={20}><g stroke="none"><path d="M11 1l6 2v14l-6 2-8-3 8 .5V4z" fill="#d9451f" /><path d="M11 1v3.500L6.500 6v7.500L3 15V5z" fill="#e8642f" /></g></Svg>],
  ["McAfee", <Svg s={20}><path d="M2 1l8 4.500L18 1v13l-8 5-8-5zM5.500 6v6.500l4.500 3 4.500-3V6L10 9z" fill="#c4283f" fillRule="evenodd" stroke="none" /></Svg>],
  ["Store", <Svg s={20}><path d="M7 5V2h6v3" stroke="#2a8bd6" strokeWidth="1.500" /><rect x="1" y="5" width="18" height="14" rx="2" fill="#1c5a97" stroke="none" /><g stroke="none"><path d="M6 8h3.500v3.500H6z" fill="#e8643c" /><path d="M10.500 8H14v3.500h-3.500z" fill="#8cc84b" /><path d="M6 12.500h3.500V16H6z" fill="#4db4ee" /><path d="M10.500 12.500H14V16h-3.500z" fill="#f7c743" /></g></Svg>],
  ["Teams", <Svg s={20}><g stroke="none"><circle cx="12" cy="4.500" r="3" fill="#7b83eb" /><path d="M8 8h11v6a5 5 0 0 1-10 3z" fill="#7b83eb" /><path d="M1 6h10v10H1z" fill="#4b53bc" /><text x="3.500" y="14" fontSize="9" fontWeight="700" fill="#fff" fontFamily={lf}>T</text><circle cx="16.500" cy="4" r="3.500" fill="#d43a4c" /><path d="M14.500 3.500h4v1h-4z" fill="#fff" /></g></Svg>, "bg-[#7a7f88] w-1"],
  ["PowerPoint", <Svg s={20}><g stroke="none"><circle cx="11" cy="10" r="9" fill="#e66a45" /><path d="M11 1a9 9 0 0 1 9 9h-9z" fill="#f2906c" /><path d="M1 5h10v10H1z" fill="#c43e1c" /><text x="3" y="13.500" fontSize="9" fontWeight="700" fill="#fff" fontFamily={lf}>P</text></g></Svg>],
  ["Revit", <Svg s={20}><text x="4" y="16" fontSize="18" fontWeight="700" fill="#2b5f9e" stroke="none" fontFamily={lf}>R</text></Svg>, "bg-[#1c6fb0] w-3", true],
  ["Settings", <Svg s={20}><circle cx="10" cy="10" r="6.500" fill="#1b66a8" stroke="#5a6470" strokeWidth="3" /><circle cx="10" cy="10" r="8.500" stroke="#5a6470" strokeWidth="2" strokeDasharray="3.300 3.370" /><circle cx="10" cy="10" r="2.500" fill="#cfe0f0" stroke="none" /></Svg>, "bg-[#7a7f88] w-1"],
];

function Taskbar() {
  return (
    <nav className="flex h-8 shrink-0 items-stretch border-b border-white/80 bg-linear-to-r from-[#e0f0f8] via-[#cfdaf3] to-[#e3f1f9] text-[#333]">
      <div className="flex flex-1 items-start pt-px">
        <button type="button" className="flex items-center gap-[6px] pl-4 text-left">
          <Svg w={19} h={14}><path d="M5 13a4 4 0 0 1 0-7.500A5 5 0 0 1 14 6a3.500 3.500 0 0 1 1 7z" fill="#a9c2ea" stroke="#7e9fd6" strokeWidth="1" /></Svg>
          <span className="leading-[13px]">
            30°C
            <br />
            <span className="text-[#666]">Cloudy</span>
          </span>
        </button>
      </div>
      <div className="flex w-[451px] shrink-0">
        {apps.map(([label, icon, mark, on]) => (
          <button
            key={label}
            type="button"
            aria-label={label}
            className={`flex h-7 flex-1 flex-col items-center justify-between rounded pt-1 pb-px ${on === true ? "bg-white/60" : ""}`}
          >
            {icon}
            <span className={`h-[2px] rounded ${mark || ""}`} />
          </button>
        ))}
      </div>
      <div className="flex h-7 flex-1 items-center justify-end">
        <div className="flex items-center gap-[5px] pr-[3px]">
          <IconButton label="Hidden icons"><Svg w={12} h={14}><path d="M1 9l5-5 5 5" stroke="#222" /></Svg></IconButton>
          <IconButton label="OneDrive"><Svg s={14}><path d="M3.500 10a2.800 2.800 0 0 1 0-5.500 4 4 0 0 1 7.500 0c3 1 3 5 0 5.500z" fill="#8a8a8a" stroke="#555" strokeWidth="1" /><circle cx="9.500" cy="9.500" r="3.500" fill="#d43a33" stroke="none" /><path d="M8 8l3 3M11 8l-3 3" stroke="#fff" /></Svg></IconButton>
          <IconButton label="Sync"><Svg s={14}><path d="M2 6a5 5 0 0 1 9-2M12 1v3H9M2 9a5 5 0 0 0 4 4M1 12V9h3" stroke="#333" /><circle cx="10.500" cy="10" r="3.300" fill="#1c76cc" stroke="none" /></Svg></IconButton>
          <IconButton label="Bluetooth"><Svg s={14}><rect x="2.500" y="0.500" width="9" height="13" rx="4.500" fill="#1379d4" stroke="none" /><path d="M4.500 4.500l5 4.500L7 11.500v-9L9.500 5l-5 4.500" stroke="#fff" strokeWidth="1" /></Svg></IconButton>
        </div>
        <IconButton label="Microphone" className="h-full w-6 rounded-b bg-[#0b63bd]"><Svg s={14}><rect x="5" y="1" width="4" height="8" rx="2" fill="#fff" stroke="none" /><path d="M3 7c0 5 8 5 8 0M7 11v2.500" stroke="#fff" /></Svg></IconButton>
        <button type="button" className="w-9 text-center leading-[13px]">ENG<br />IN</button>
        <button type="button" aria-label="Network, sound and battery" className="flex items-center gap-[5px] pl-1">
          <Svg s={14}><path d="M1 5.500c3.500-3.500 8.500-3.500 12 0M3 8c2.500-2.500 5.500-2.500 8 0M5 10c1.300-1.200 2.700-1.200 4 0" stroke="#222" /><circle cx="7" cy="11.500" r="1" fill="#222" stroke="none" /></Svg>
          <Svg s={14}><path d="M1 5.500h2.500L7 2.500v9L3.500 8.500H1zM9 5c1 1 1 3 0 4M11 3c2.500 2 2.500 6 0 8" stroke="#222" strokeWidth="1" /></Svg>
          <Svg s={14}><path d="M3 4h9v6H3z" fill="#222" stroke="#222" /><path d="M13.500 6v2" stroke="#222" /><path d="M1 2h4v3H1z" fill="#222" stroke="none" /></Svg>
        </button>
        <button type="button" className="w-[57px] text-right leading-[13px]">11:41<br />08-11-2022</button>
        <IconButton label="Focus assist" className="mr-3 ml-[9px]"><Svg s={14}><path d="M6 1c5-.5 8 5 5 9-2.500 3-6.500 3-9 0 5 .5 7-3 4-9z" stroke="#444" strokeWidth="1.100" /></Svg></IconButton>
      </div>
    </nav>
  );
}

export default function App() {
  return (
    <div className="flex min-h-screen flex-col bg-black px-[37px] pb-[49px] font-['Open_Sans','Noto_Sans',sans-serif] text-[9px]/[12px]">
      <TitleBar />
      <RibbonTabs />
      <Ribbon />
      <OptionsBar />
      <div className="flex flex-1">
        <PropertiesPanel />
        <DrawingArea />
        <ProjectBrowser />
      </div>
      <StatusBar />
      <Taskbar />
    </div>
  );
}
